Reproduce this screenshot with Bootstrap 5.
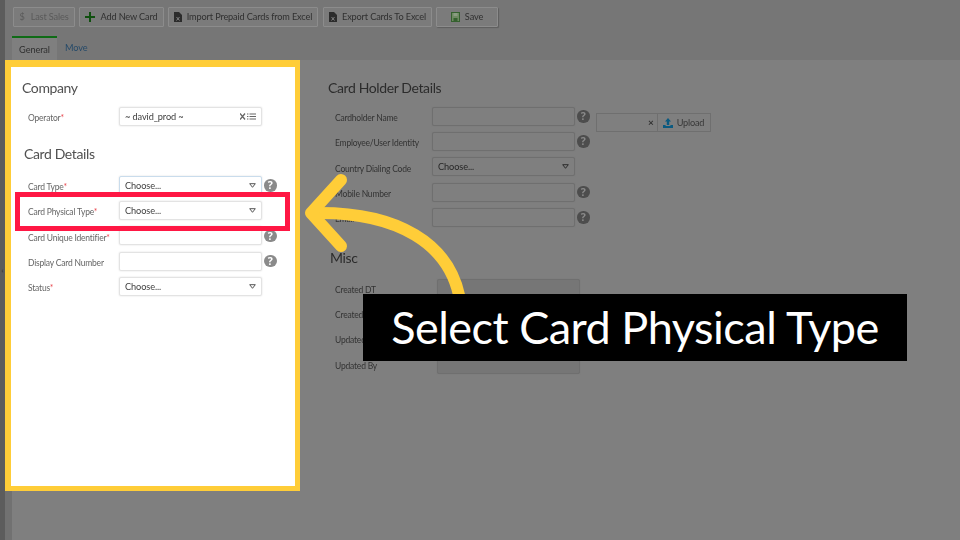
<!DOCTYPE html>
<html lang="en">
<head>
<meta charset="utf-8">
<title>Select Card Physical Type</title>
<link href="https://cdn.jsdelivr.net/npm/bootstrap@5.3.0/dist/css/bootstrap.min.css" rel="stylesheet">
<style>
html,body{margin:0;background:#7c7c7c;}
.stage{position:relative;width:960px;height:540px;overflow:hidden;display:flex;font-family:Lato,"Open Sans","Liberation Sans",sans-serif;color:#333;font-size:8.5px;letter-spacing:-.2px;}
.railbar{width:5px;background:#5c5c5c;flex:none;display:flex;align-items:center;justify-content:center;font-size:7px;color:#222;line-height:1;}
.mainarea{flex:1;display:flex;flex-direction:column;min-width:0;}
.topband{background:#767676;height:60px;flex:none;padding:7px 0 0 8px;filter:blur(.25px);}
.toolrow{gap:4px;}
.toolbtn{height:20px;padding:0;font-size:9.2px;letter-spacing:-.15px;line-height:18px;border:1px solid #8c8c8c;border-radius:1px;background:#7b7b7b;color:#303030;display:flex;align-items:center;justify-content:center;gap:5px;white-space:nowrap;}
.toolbtn svg{flex:none;}
.toolbtn.dimmed{color:#5a5a5a;}
.toolbtn.raised{box-shadow:1px 1px 1px #5f5f5f;}
.wide-sales{width:62px;gap:6px;}
.wide-add{width:85px;}
.wide-import{width:150px;margin-right:1px;}
.wide-export{width:109px;}
.wide-save{width:62px;}
.tabrow{display:flex;margin:9px 0 0 -1px;height:24px;}
.tabone{width:45px;border-top:2px solid #0f6b16;background:#7f7f7f;color:#303030;text-align:center;padding-top:5px;font-size:9.2px;letter-spacing:-.1px;}
.tabtwo{margin-left:8px;color:#264a69;padding-top:5px;font-size:9.2px;letter-spacing:-.1px;}
.bodyrow{display:flex;flex:1;background:#7f7f7f;background-image:linear-gradient(90deg,#717171 7px,transparent 7px);}
.whitepanel{width:295px;height:431px;flex:none;background:#fff;border:solid #ffcd38;border-width:7px 5px 5px 6px;padding:11px 0 0 11px;color:#666;}
.panelinner{filter:blur(.25px);}
.secthead{font-size:14px;letter-spacing:-.38px;line-height:20px;color:#505050;margin:0;font-weight:400;}
.fieldrow{display:flex;align-items:center;height:19px;margin-bottom:6.2px;}
.fieldrow label{margin:0;padding-left:6px;width:97px;flex:none;white-space:nowrap;position:relative;top:2px;}
.req{color:#e9484f;}
.boxfield{width:143px;height:100%;border:1px solid #e3e3e3;border-radius:2px;background:#fff;box-shadow:0 0 2px #dcdcdc;display:flex;align-items:center;justify-content:space-between;padding:0 5px;color:#404040;font-size:9.2px;letter-spacing:-.1px;flex:none;}
.boxfield span{padding-top:1px;}
.boxfield.focused{border-color:#c9dcec;}
.helpdot{width:12.5px;height:12.5px;border-radius:50%;background:#8a8a8a;color:#fff;font-family:"Open Sans",sans-serif;font-size:10.5px;font-weight:700;line-height:12.5px;text-align:center;letter-spacing:0;margin-left:2px;flex:none;}
.rightcol{margin-left:28px;padding-top:18px;width:400px;flex:none;filter:blur(.25px);}
.rightcol .secthead{color:#2c2c2c;}
.rightcol .boxfield{background:#7f7f7f;border-color:#6f6f6f;box-shadow:0 0 1px #707070;color:#262626;}
.rightcol .boxfield.shaded{background:#767676;}
.rightcol .helpdot{background:#4d4d4d;color:#8a8a8a;margin-left:2px;}
.rightcol label{padding-left:7px;width:104px;}
.holdgrid{display:flex;margin-top:9px;}
.uploadgroup{display:flex;height:19px;margin:6px 0 0 6px;flex:none;}
.uploadfield{width:62px;border:1px solid #6f6f6f;display:flex;align-items:center;justify-content:flex-end;padding-right:3px;color:#303030;font-weight:700;font-size:10px;}
.uploadbtn{width:53px;border:1px solid #6f6f6f;border-left:0;display:flex;align-items:center;justify-content:center;gap:4px;color:#383838;font-size:9.2px;}
.miscblock{margin-top:15px;}
.miscblock .secthead{margin-left:2px;margin-bottom:11px;}
.miscblock label{width:109px;}
.annot-red{position:absolute;left:15px;top:192px;width:275px;height:39px;border:5px solid #ff1744;z-index:3;}
.annot-arrow{position:absolute;left:300px;top:170px;z-index:3;}
.annot-caption{position:absolute;left:363px;top:294px;width:544px;height:67px;background:#000;color:#fff;font-family:Lato,"Liberation Sans",sans-serif;font-size:45px;letter-spacing:-.5px;line-height:67px;text-align:center;z-index:4;white-space:nowrap;}
</style>
</head>
<body>
<div class="stage">
  <div class="railbar">&#8249;</div>
  <div class="mainarea">
    <div class="topband">
      <div class="d-flex toolrow">
        <button class="btn toolbtn dimmed wide-sales" type="button"><span>$</span>Last Sales</button>
        <button class="btn toolbtn wide-add" type="button"><svg width="10" height="10" viewBox="0 0 10 10"><path d="M4 0h2v4h4v2H6v4H4V6H0V4h4z" fill="#10500f"/></svg>Add New Card</button>
        <button class="btn toolbtn wide-import" type="button"><svg width="8" height="10" viewBox="0 0 8 10"><path d="M0 0h5l3 3v7H0z" fill="#2c2c2c"/><path d="M2.5 5l3 3.5m0-3.5l-3 3.5" stroke="#999" stroke-width=".8"/></svg>Import Prepaid Cards from Excel</button>
        <button class="btn toolbtn wide-export" type="button"><svg width="8" height="10" viewBox="0 0 8 10"><path d="M0 0h5l3 3v7H0z" fill="#2c2c2c"/><path d="M2.5 5l3 3.5m0-3.5l-3 3.5" stroke="#999" stroke-width=".8"/></svg>Export Cards To Excel</button>
        <button class="btn toolbtn raised wide-save" type="button"><svg width="9" height="10" viewBox="0 0 9 10"><rect x=".5" y=".5" width="8" height="9" fill="#6f8a63" stroke="#35612f"/><rect x="2.5" y="1" width="4" height="3" fill="#8a9c82"/><rect x="2.5" y="6" width="4" height="3" fill="#35612f"/></svg>Save</button>
      </div>
      <div class="tabrow"><div class="tabone">General</div><div class="tabtwo">Move</div></div>
    </div>
    <div class="bodyrow">
      <div class="whitepanel"><div class="panelinner">
        <h5 class="secthead">Company</h5>
        <div class="fieldrow" style="margin-top:9px"><label>Operator<span class="req">*</span></label><div class="boxfield"><span>~ david_prod ~</span>
          <svg width="16" height="8" viewBox="0 0 16 8"><path d="M0 .5l5 6m0-6l-5 6" stroke="#666" stroke-width="1.3"/><path d="M7 1h1.4M7 3.5h1.4M7 6h1.4M9.5 1H16M9.5 3.5H16M9.5 6H16" stroke="#666" stroke-width="1"/></svg></div></div>
        <h5 class="secthead" style="margin:18px 0 12px 2px">Card Details</h5>
        <div class="fieldrow"><label>Card Type<span class="req">*</span></label><div class="boxfield focused"><span>Choose...</span><svg width="7" height="5" viewBox="0 0 7 5"><path d="M.7.7h5.6L3.5 4.3z" fill="#fff" stroke="#555"/></svg></div><span class="helpdot">?</span></div>
        <div class="fieldrow"><label>Card Physical Type<span class="req">*</span></label><div class="boxfield"><span>Choose...</span><svg width="7" height="5" viewBox="0 0 7 5"><path d="M.7.7h5.6L3.5 4.3z" fill="#fff" stroke="#555"/></svg></div></div>
        <div class="fieldrow"><label>Card Unique Identifier<span class="req">*</span></label><div class="boxfield"></div><span class="helpdot">?</span></div>
        <div class="fieldrow"><label>Display Card Number</label><div class="boxfield"></div><span class="helpdot">?</span></div>
        <div class="fieldrow"><label>Status<span class="req">*</span></label><div class="boxfield"><span>Choose...</span><svg width="7" height="5" viewBox="0 0 7 5"><path d="M.7.7h5.6L3.5 4.3z" fill="#fff" stroke="#555"/></svg></div></div>
      </div></div>
      <div class="rightcol">
        <h5 class="secthead">Card Holder Details</h5>
        <div class="holdgrid">
          <div>
            <div class="fieldrow"><label>Cardholder Name</label><div class="boxfield"></div><span class="helpdot">?</span></div>
            <div class="fieldrow"><label>Employee/User Identity</label><div class="boxfield"></div><span class="helpdot">?</span></div>
            <div class="fieldrow"><label>Country Dialing Code</label><div class="boxfield"><span>Choose...</span><svg width="7" height="5" viewBox="0 0 7 5"><path d="M.7.7h5.6L3.5 4.3z" fill="#7f7f7f" stroke="#2c2c2c"/></svg></div></div>
            <div class="fieldrow"><label>Mobile Number</label><div class="boxfield"></div><span class="helpdot">?</span></div>
            <div class="fieldrow"><label>Email</label><div class="boxfield"></div><span class="helpdot">?</span></div>
          </div>
          <div class="uploadgroup">
            <div class="uploadfield">&#215;</div>
            <div class="uploadbtn"><svg width="10" height="10" viewBox="0 0 10 10"><path d="M5 0l3 3.4H6.2V7H3.8V3.4H2zM0 7h2.6v1h4.8V7H10v3H0z" fill="#0b5a80"/></svg>Upload</div>
          </div>
        </div>
        <div class="miscblock">
          <h5 class="secthead">Misc</h5>
          <div class="fieldrow"><label>Created DT</label><div class="boxfield shaded"></div></div>
          <div class="fieldrow"><label>Created By</label><div class="boxfield shaded"></div></div>
          <div class="fieldrow"><label>Updated DT</label><div class="boxfield shaded"></div></div>
          <div class="fieldrow"><label>Updated By</label><div class="boxfield shaded"></div></div>
        </div>
      </div>
    </div>
  </div>
  <div class="annot-red"></div>
  <svg class="annot-arrow" width="170" height="130" viewBox="0 0 170 130" fill="none" stroke="#ffcd38" stroke-width="12" stroke-linecap="round" stroke-linejoin="round"><path d="M159 125C148 75 100 42 16 43"/><path d="M41 10L11 43l30 33"/></svg>
  <div class="annot-caption">Select Card Physical Type</div>
</div>
<script src="https://cdn.jsdelivr.net/npm/bootstrap@5.3.0/dist/js/bootstrap.bundle.min.js"></script>
</body>
</html>
